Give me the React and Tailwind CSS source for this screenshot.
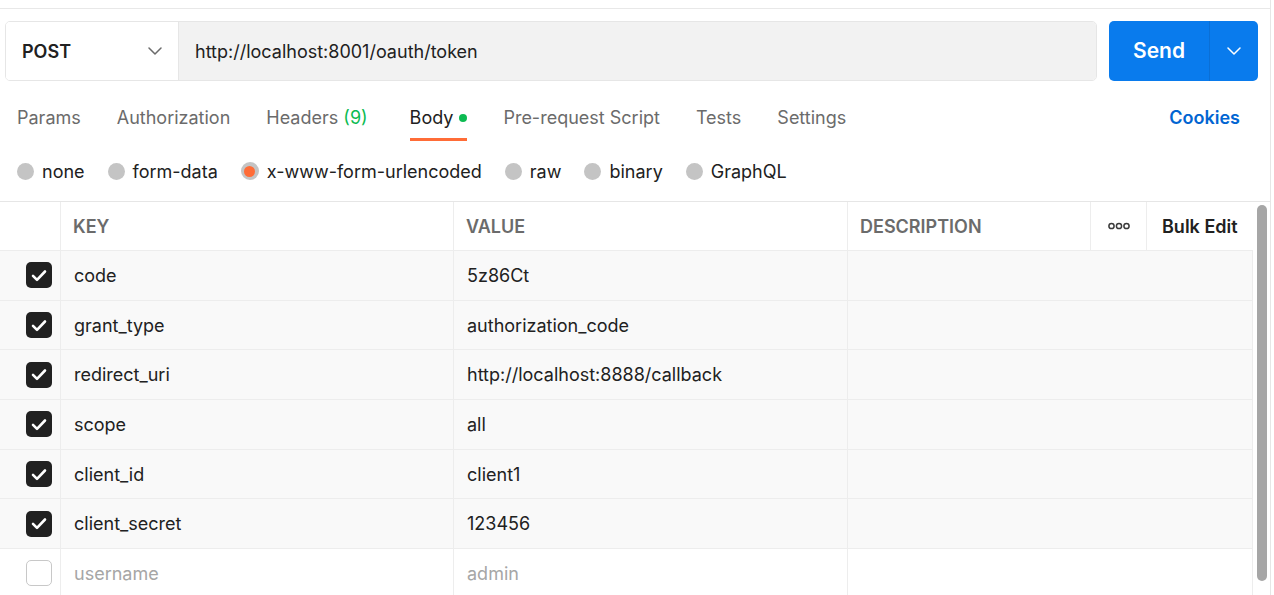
import React from "react";

const rows = [
  { key: "code", value: "5z86Ct", checked: true },
  { key: "grant_type", value: "authorization_code", checked: true },
  { key: "redirect_uri", value: "http://localhost:8888/callback", checked: true },
  { key: "scope", value: "all", checked: true },
  { key: "client_id", value: "client1", checked: true },
  { key: "client_secret", value: "123456", checked: true },
  { key: "username", value: "admin", checked: false },
];

function Chevron({ className }) {
  return (
    <svg className={className} width="14" height="8" viewBox="0 0 14 8" fill="none">
      <path d="M1 1l6 6 6-6" stroke="currentColor" strokeWidth="1.5" strokeLinecap="round" strokeLinejoin="round" />
    </svg>
  );
}

function Checkbox({ checked }) {
  if (!checked) {
    return <div className="w-[26px] h-[26px] rounded-[5px] border border-[#c8c8c8] bg-white" />;
  }
  return (
    <div className="w-[26px] h-[26px] rounded-[5px] bg-[#212121] flex items-center justify-center">
      <svg width="16" height="13" viewBox="0 0 16 13" fill="none">
        <path d="M2 6.8l4 4L14 2.5" stroke="white" strokeWidth="2.6" strokeLinecap="round" strokeLinejoin="round" />
      </svg>
    </div>
  );
}

function Radio({ label, selected }) {
  return (
    <div className="flex items-center gap-[8px]">
      {selected ? (
        <div className="w-[18px] h-[18px] rounded-full bg-[#c4c4c4] flex items-center justify-center">
          <div className="w-[11px] h-[11px] rounded-full bg-[#ff6c37]" />
        </div>
      ) : (
        <div className="w-[17px] h-[17px] rounded-full bg-[#c4c4c4]" />
      )}
      <span className="text-[18px] text-[#212121]">{label}</span>
    </div>
  );
}

export default function App() {
  return (
    <div
      className="relative w-[1274px] h-[595px] overflow-hidden bg-white"
      style={{ fontFamily: "Inter, 'Noto Sans', sans-serif" }}
    >
      <div className="w-[1271px] h-full border-r border-[#e6e6e6]">
        <div className="h-[8px]" />
        <div className="h-px bg-[#e8e8e8]" />
        {/* request bar */}
        <div className="flex items-stretch mt-[12px] pl-[5px] pr-[12px] h-[60px]">
          <div className="flex w-[1092px] rounded-[5px] border border-[#e6e6e6] overflow-hidden">
            <div className="w-[173px] bg-white flex items-center justify-between pl-[16px] pr-[16px] border-r border-[#e6e6e6]">
              <span className="text-[18px] font-semibold text-[#212121]">POST</span>
              <Chevron className="text-[#6b6b6b]" />
            </div>
            <div className="flex-1 bg-[#f2f2f2] flex items-center pl-[16px]">
              <span className="text-[18px] text-[#212121]">http://localhost:8001/oauth/token</span>
            </div>
          </div>
          <div className="ml-[12px] flex w-[149px] rounded-[5px] bg-[#097bed] overflow-hidden">
            <div className="w-[101px] flex items-center justify-center border-r border-[#0a6fd6]">
              <span className="text-[21px] font-semibold text-white">Send</span>
            </div>
            <div className="flex-1 flex items-center justify-center">
              <Chevron className="text-white" />
            </div>
          </div>
        </div>
        {/* tabs */}
        <div className="flex items-start h-[60px] mt-[8px] pl-[17px] pr-[30px]">
          <div className="flex gap-[36px] text-[18px] text-[#6b6b6b]">
            <div className="pt-[15px]">Params</div>
            <div className="pt-[15px]">Authorization</div>
            <div className="pt-[15px]">
              Headers <span className="text-[#0cbb52]">(9)</span>
            </div>
            <div className="flex flex-col items-stretch ml-[6px]">
              <div className="pt-[15px] flex items-center gap-[6px] text-[#212121]">
                Body
                <span className="inline-block w-[8px] h-[8px] rounded-full bg-[#0cbb52]" />
              </div>
              <div className="h-[3px] bg-[#ff6c37] mt-[7px]" />
            </div>
            <div className="pt-[15px]">Pre-request Script</div>
            <div className="pt-[15px]">Tests</div>
            <div className="pt-[15px]">Settings</div>
          </div>
          <div className="ml-auto pt-[15px] text-[18px] font-semibold text-[#0265d2]">Cookies</div>
        </div>
        {/* radios */}
        <div className="flex items-center gap-[23px] pl-[17px] h-[24px] mt-[10px]">
          <Radio label="none" />
          <Radio label="form-data" />
          <Radio label="x-www-form-urlencoded" selected />
          <Radio label="raw" />
          <Radio label="binary" />
          <Radio label="GraphQL" />
        </div>
        {/* table */}
        <div className="mt-[18px] border-t border-[#e6e6e6]">
          <div className="flex h-[49px] border-b border-[#ededed] w-[1253px]">
            <div className="w-[61px] border-r border-[#ededed]" />
            <div className="w-[393px] border-r border-[#ededed] flex items-center pl-[12px] text-[18px] font-semibold text-[#6b6b6b]">KEY</div>
            <div className="w-[394px] border-r border-[#ededed] flex items-center pl-[12px] text-[18px] font-semibold text-[#6b6b6b]">VALUE</div>
            <div className="w-[243px] border-r border-[#ededed] flex items-center pl-[12px] text-[18px] font-semibold text-[#6b6b6b]">DESCRIPTION</div>
            <div className="w-[56px] border-r border-[#ededed] flex items-center justify-center">
              <svg width="22" height="8" viewBox="0 0 22 8" fill="none">
                <circle cx="3.5" cy="4" r="2.6" stroke="#3a3a3a" strokeWidth="1.5" />
                <circle cx="11" cy="4" r="2.6" stroke="#3a3a3a" strokeWidth="1.5" />
                <circle cx="18.5" cy="4" r="2.6" stroke="#3a3a3a" strokeWidth="1.5" />
              </svg>
            </div>
            <div className="flex-1 flex items-center pl-[15px] text-[18px] font-semibold text-[#212121]">Bulk Edit</div>
          </div>
          {rows.map((r) => (
            <div
              key={r.key}
              className={`flex h-[49.7px] border-b border-r border-[#ededed] w-[1253px] ${r.checked ? "bg-[#f9f9f9]" : "bg-white"}`}
            >
              <div className="w-[61px] border-r border-[#ededed] flex items-center justify-end pr-[8px]">
                <Checkbox checked={r.checked} />
              </div>
              <div className={`w-[393px] border-r border-[#ededed] flex items-center pl-[13px] text-[18px] ${r.checked ? "text-[#212121]" : "text-[#a6a6a6]"}`}>
                {r.key}
              </div>
              <div className={`w-[394px] border-r border-[#ededed] flex items-center pl-[13px] text-[18px] ${r.checked ? "text-[#212121]" : "text-[#a6a6a6]"}`}>
                {r.value}
              </div>
              <div className="flex-1" />
            </div>
          ))}
        </div>
      </div>
      <div className="absolute left-[1257px] top-[205px] w-[10px] h-[376px] rounded-full bg-[#a6a6a6]" />
    </div>
  );
}
